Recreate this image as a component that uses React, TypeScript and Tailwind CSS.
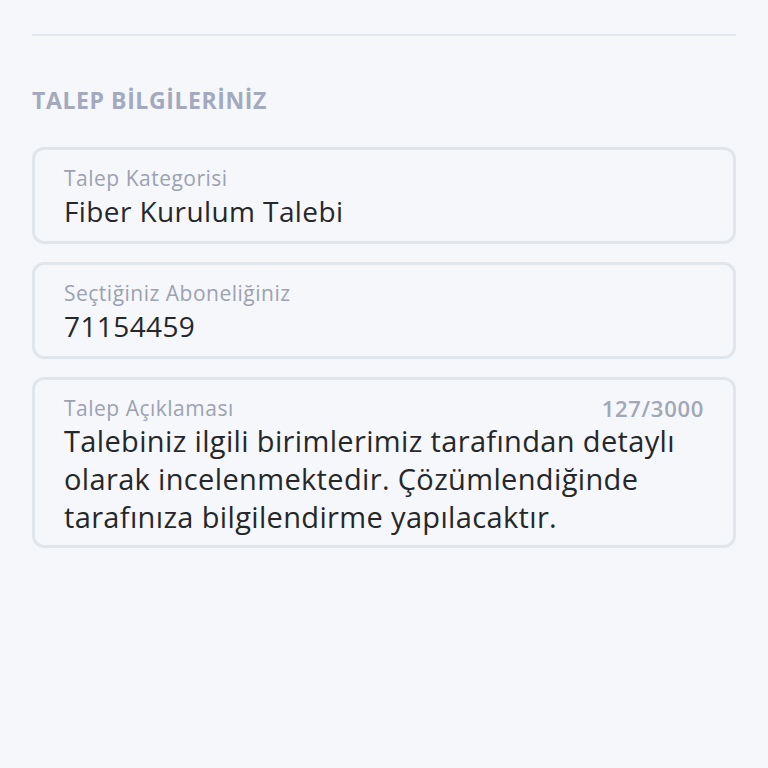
import React from 'react';

const fields = [
    { label: 'Talep Kategorisi', value: 'Fiber Kurulum Talebi' },
    { label: 'Seçtiğiniz Aboneliğiniz', value: '71154459' },
];

const descriptionLines = [
    'Talebiniz ilgili birimlerimiz tarafından detaylı',
    'olarak incelenmektedir. Çözümlendiğinde',
    'tarafınıza bilgilendirme yapılacaktır.',
];

const App: React.FC = () => {
    return (
        <div className="min-h-[768px] w-full bg-[#f5f7fa] px-8 pt-[34px] font-['Open_Sans',sans-serif]">
            <div className="h-[2px] w-full bg-[#e3e7ef]" />

            <h2 className="mt-[51px] text-[23px] font-bold leading-[26px] tracking-[0.6px] text-[#a3aabd]">
                TALEP BİLGİLERİNİZ
            </h2>

            <div className="mt-[34px] flex flex-col gap-[18px]">
                {fields.map(f => (
                    <div key={f.label} className="h-[97px] rounded-[12px] border-[3px] border-[#e1e5ec] px-[29px] pt-[15px]">
                        <p className="text-[21px] leading-[26px] tracking-[0.5px] text-[#9ba2b2]">{f.label}</p>
                        <p className="mt-[2px] text-[28px] leading-[36px] tracking-[0.4px] text-[#25272b]">{f.value}</p>
                    </div>
                ))}

                {/* Talep Açıklaması */}
                <div className="h-[171px] rounded-[12px] border-[3px] border-[#e1e5ec] pl-[29px] pr-[29px] pt-[15px]">
                    <div className="flex items-center justify-between">
                        <p className="text-[21px] leading-[26px] tracking-[0.5px] text-[#9ba2b2]">Talep Açıklaması</p>
                        <span className="text-[22px] font-semibold leading-[26px] tracking-[0.7px] text-[#a0a7b7]">127/3000</span>
                    </div>
                    <p className="mt-[1px] text-[29px] leading-[38px] tracking-[0.35px] text-[#25272b]">
                        {descriptionLines.map(line => (
                            <span key={line} className="block">{line}</span>
                        ))}
                    </p>
                </div>
            </div>
        </div>
    );
};

export default App;
